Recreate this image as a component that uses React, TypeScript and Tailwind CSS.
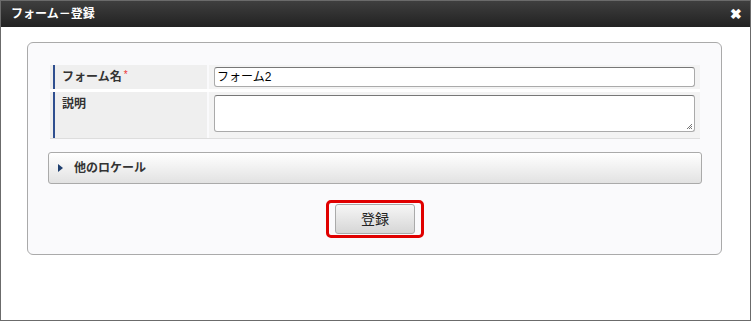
import React from "react";

export default function App() {
  return (
    <div
      className="w-[751px] h-[321px] border border-[#6b6b6b] bg-white flex flex-col overflow-hidden"
      style={{ fontFamily: '"Liberation Sans", "Noto Sans CJK JP", sans-serif' }}
    >
      <div className="h-[26px] shrink-0 bg-gradient-to-b from-[#3f3f3f] to-[#222] flex items-center justify-between pl-[10px] pr-[8px]">
        <span className="text-white text-[12px] font-bold">フォーム－登録</span>
        <span className="text-white text-[14px] font-bold leading-none">✖</span>
      </div>

      <div className="pl-[26px] pr-[28px] pt-[15px]">
        <div className="h-[213px] rounded-[6px] border border-[#aaa] bg-[#fafafc] pl-[22px] pr-[21px] pt-[22px]">
          {/* form table */}
          <div className="flex flex-col border-b border-[#ddd]">
            <div className="flex h-[27px] border-b-[3px] border-white">
              <div className="w-[157px] bg-[#efefef] flex items-center">
                <div className="ml-[3px] w-[2px] h-full bg-[#2f4f8f]" />
                <span className="ml-[7px] text-[12px] font-bold text-[#333]">フォーム名</span>
                <span className="ml-[2px] text-[10px] text-[#e33] -mt-[6px]">*</span>
              </div>
              <div className="w-[2px]" />
              <div className="flex-1 bg-[#f3f3f3] px-[5px] flex items-center">
                <div className="w-full h-[20px] rounded-[3px] border border-[#aaa] border-t-[#777] bg-white text-[12px] text-black px-[2px] flex items-center">
                  フォーム2
                </div>
              </div>
            </div>
            <div className="flex h-[46px]">
              <div className="w-[157px] bg-[#efefef] flex">
                <div className="ml-[3px] w-[2px] h-full bg-[#2f4f8f]" />
                <span className="ml-[7px] mt-[3px] text-[12px] font-bold text-[#333]">説明</span>
              </div>
              <div className="w-[2px]" />
              <div className="flex-1 bg-[#f3f3f3] px-[5px] pt-[3px]">
                <div className="relative w-full h-[37px] rounded-[3px] border border-[#aaa] border-t-[#777] bg-white">
                  <svg className="absolute right-[1px] bottom-[1px]" width="7" height="7" viewBox="0 0 7 7">
                    <path d="M6 1L1 6M6 3L3 6M6 5L5 6" stroke="#777" strokeWidth="1" />
                  </svg>
                </div>
              </div>
            </div>
          </div>

          {/* accordion */}
          <div className="mt-[13px] -mx-[2px] h-[32px] rounded-[3px] border border-[#aaa] bg-gradient-to-b from-white to-[#e2e2e2] flex items-center pl-[9px]">
            <svg width="5" height="8" viewBox="0 0 5 8">
              <path d="M0 0L5 4L0 8Z" fill="#1f3f6f" />
            </svg>
            <span className="ml-[11px] text-[12px] font-bold text-[#333]">他のロケール</span>
          </div>

          {/* submit */}
          <div className="flex justify-center mt-[16px]">
            <div className="w-[98px] h-[38px] rounded-[5px] border-[3px] border-[#e00000] flex items-center justify-center">
              <div className="w-[80px] h-[30px] rounded-[3px] border border-[#aaa] bg-gradient-to-b from-[#f6f6f6] to-[#d6d6d6] flex items-center justify-center text-[14px] text-[#222]">
                登録
              </div>
            </div>
          </div>
        </div>
      </div>
    </div>
  );
}
